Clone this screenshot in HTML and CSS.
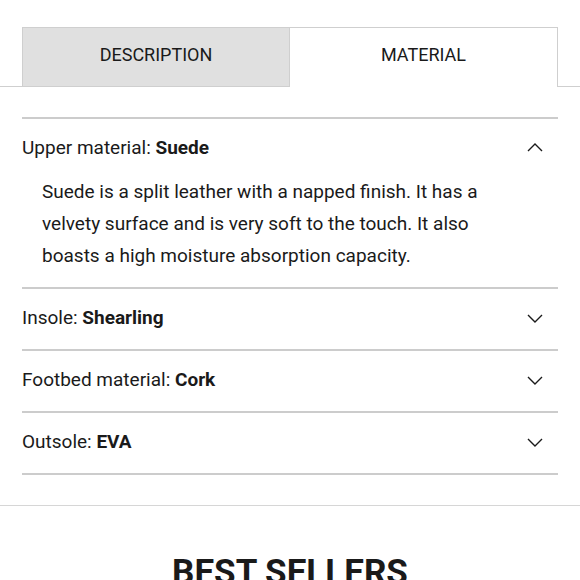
FILE: index.html
```html
<!DOCTYPE html>
<html lang="en">
  <head>
    <meta charset="UTF-8" />
    <meta name="viewport" content="width=device-width, initial-scale=1.0" />
    <title>Material</title>
    <link rel="stylesheet" href="styles.css">
  </head>
  <body>
    <div class="tabs">
      <div class="tab">DESCRIPTION</div>
      <div class="tab active">MATERIAL</div>
    </div>

    <div class="accordion">
      <div class="item open">
        <div class="item-head">
          <span>Upper material: <b>Suede</b></span>
          <svg class="chev" width="18" height="18" viewBox="0 0 18 18"><path d="M2 12 L9 5 L16 12" fill="none" stroke="#1a1a1a" stroke-width="1.4"/></svg>
        </div>
        <p class="item-body">Suede is a split leather with a napped finish. It has a velvety surface and is very soft to the touch. It also boasts a high moisture absorption capacity.</p>
      </div>
      <div class="item">
        <div class="item-head">
          <span>Insole: <b>Shearling</b></span>
          <svg class="chev" width="18" height="18" viewBox="0 0 18 18"><path d="M2 6 L9 13 L16 6" fill="none" stroke="#1a1a1a" stroke-width="1.4"/></svg>
        </div>
      </div>
      <div class="item">
        <div class="item-head">
          <span>Footbed material: <b>Cork</b></span>
          <svg class="chev" width="18" height="18" viewBox="0 0 18 18"><path d="M2 6 L9 13 L16 6" fill="none" stroke="#1a1a1a" stroke-width="1.4"/></svg>
        </div>
      </div>
      <div class="item">
        <div class="item-head">
          <span>Outsole: <b>EVA</b></span>
          <svg class="chev" width="18" height="18" viewBox="0 0 18 18"><path d="M2 6 L9 13 L16 6" fill="none" stroke="#1a1a1a" stroke-width="1.4"/></svg>
        </div>
      </div>
    </div>

    <div class="best">
      <h2>BEST SELLERS</h2>
    </div>
  </body>
</html>
```

FILE: styles.css
```css
body {
  margin: 0;
  font-family: Roboto, "Liberation Sans", sans-serif;
  color: #1a1a1a;
  background-color: #fff;
}
.tabs {
  display: grid;
  grid-template-columns: 1fr 1fr;
  padding: 27px 22px 0;
  border-bottom: 1px solid #cfcfcf;
}
.tab {
  height: 59px;
  box-sizing: border-box;
  padding-bottom: 6px;
  display: flex;
  justify-content: center;
  align-items: center;
  font-size: 18px;
  background-color: #e0e0e0;
  border: 1px solid #cfcfcf;
  border-bottom: none;
  margin-bottom: -1px;
}
.tab.active {
  background-color: #fff;
  border-left: none;
  height: 60px;
  padding-bottom: 7px;
}
.accordion {
  margin: 30px 22px 0;
  border-bottom: 2px solid #cccccc;
}
.item {
  border-top: 2px solid #cccccc;
}
.item-head {
  height: 60px;
  box-sizing: border-box;
  padding-bottom: 3px;
  display: flex;
  justify-content: space-between;
  align-items: center;
  font-size: 19px;
}
.chev {
  margin-right: 14px;
}
.item-body {
  margin: -3px 0 0;
  padding: 0 60px 15px 20px;
  font-size: 19px;
  line-height: 32px;
}
.best {
  margin-top: 30px;
  border-top: 1px solid #d6d6d6;
  padding-top: 46px;
  text-align: center;
}
.best h2 {
  margin: 0;
  font-size: 35px;
  font-weight: 700;
}
```
